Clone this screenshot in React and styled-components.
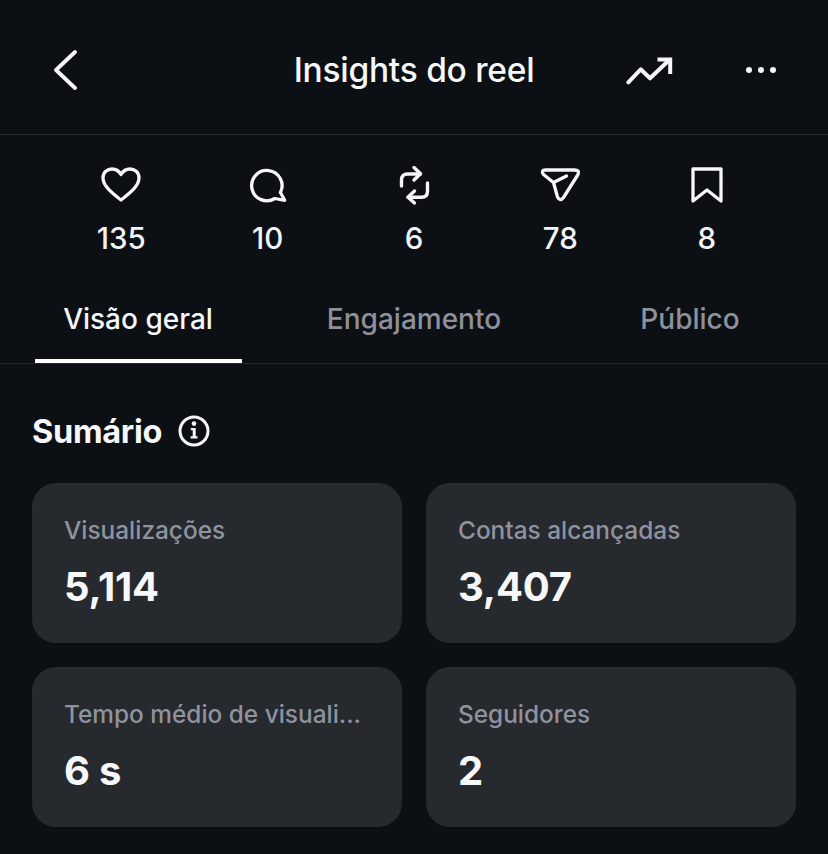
import React from "react";
import styled, { createGlobalStyle } from "styled-components";

const Global = createGlobalStyle`
  html, body { margin: 0; padding: 0; background: #0c0f14; }
  body { font-family: Inter, "Liberation Sans", sans-serif; -webkit-font-smoothing: antialiased; }
`;
const Page = styled.div`
  width: 828px; height: 854px; overflow: hidden; background: #0c0f14; color: #f5f6f7;
`;
const Header = styled.header`
  height: 135px; box-sizing: border-box; border-bottom: 1px solid #26282d;
  display: grid; grid-template-columns: 276px 1fr 276px; align-items: center; padding-top: 6px;
`;
const HeaderLeft = styled.div`padding-left: 51px; display: flex; align-items: center;`;
const Title = styled.h1`
  margin: 0; font-size: 33.5px; font-weight: 550; letter-spacing: -0.25px; text-align: center; white-space: nowrap; color: #f6f7f8;
`;
const HeaderRight = styled.div`display: flex; align-items: center; padding-left: 68px; gap: 65px;`;
const Stats = styled.div`
  display: grid; grid-template-columns: repeat(5, 146.4px); padding: 25px 0 0 48px;
`;
const Stat = styled.div`
  display: flex; flex-direction: column; align-items: center; gap: 11px;
`;
const IconBox = styled.div`height: 50px; display: flex; align-items: center; justify-content: center;`;
const Num = styled.span`font-size: 29.5px; line-height: 34px; font-weight: 500; color: #f2f3f4;`;
const Tabs = styled.nav`
  margin-top: 25px; display: grid; grid-template-columns: repeat(3, 276px); height: 84px; box-sizing: border-box;
  border-bottom: 1px solid #26282d;
`;
const Tab = styled.div`
  position: relative; display: flex; justify-content: center; padding-top: 22px;
  font-size: 28px; line-height: 34px; font-weight: 550; color: ${p => (p.$active ? "#f6f7f8" : "#8e919b")};
  &::after {
    content: ""; display: ${p => (p.$active ? "block" : "none")}; position: absolute; left: 35px; width: 207px; bottom: 0; height: 4px; background: #fff;
  }
`;
const Section = styled.section`padding: 47px 32px 0;`;
const SectionHead = styled.div`display: flex; align-items: center; gap: 16px; height: 40px; margin-bottom: 32px;`;
const SectionTitle = styled.h2`margin: 0; font-size: 32.5px; font-weight: 650; color: #f6f7f8; letter-spacing: -0.3px;`;
const Grid = styled.div`display: grid; grid-template-columns: 370px 370px; gap: 24px;`;
const Card = styled.div`
  height: 160px; box-sizing: border-box; background: #26292e; border-radius: 24px; padding: 31px 32px;
`;
const Label = styled.div`
  font-size: 24.4px; line-height: 32px; font-weight: 500; color: #8f939f; white-space: nowrap;
`;
const Value = styled.div`margin-top: 17px; font-size: 40px; line-height: 48px; font-weight: 700; color: #f6f7f8; letter-spacing: -0.2px;`;

const S = { fill: "none", stroke: "currentColor", strokeLinecap: "round", strokeLinejoin: "round" };
const Back = () => (<svg width="26" height="44" viewBox="0 0 26 44" {...S} strokeWidth="3.8"><path d="M24 4 L5 22 L24 40" /></svg>);
const Trend = () => (
  <svg width="60" height="40" viewBox="0 0 60 40" {...S} strokeWidth="4">
    <path d="M8.3 32.3 L20.7 19.3 L30 28.3 L49.5 9.8" />
    <path d="M37.5 9.5 H50.2 V24" strokeLinecap="butt" strokeLinejoin="miter" />
  </svg>
);
const Dots = () => (<svg width="32" height="8" viewBox="0 0 32 8" fill="currentColor"><circle cx="4" cy="4" r="3" /><circle cx="16" cy="4" r="3" /><circle cx="28" cy="4" r="3" /></svg>);
const Heart = () => (<svg width="40" height="36" viewBox="0 0 40 36" {...S} strokeWidth="3.3"><path d="M20 33 C14 28 2 20 2 11 C2 5 6.5 2 11 2 C15 2 18 4 20 7.5 C22 4 25 2 29 2 C33.5 2 38 5 38 11 C38 20 26 28 20 33 Z" /></svg>);
const Bubble = () => (<svg width="50" height="50" viewBox="-2.4 0 50 50" {...S} strokeWidth="3.3"><path d="M35 32.5 A15.2 15.2 0 1 0 29.5 38.5 L39.3 40.3 Z" /></svg>);
const Repost = () => (
  <svg width="50" height="50" viewBox="-1 0 50 50" {...S} strokeWidth="3.4">
    <path d="M11.5 26 V20 Q11.5 14 17.5 14 H30.5" />
    <path d="M24 7.5 L30.5 13.8 L24 20" />
    <path d="M37.5 23 V31 Q37.5 37.3 31.5 37.3 H18" />
    <path d="M24.5 31 L18 37.3 L24.5 43" />
  </svg>
);
const Send = () => (
  <svg width="50" height="50" viewBox="0 0 50 50" {...S} strokeWidth="3.3">
    <path d="M10.5 10 H39.5 Q45 10 43 14.5 L28.5 37.5 Q25 42 22.5 37 L18.5 22.5 L8.5 14.5 Q5.5 10 10.5 10 Z" />
    <path d="M18.5 22.5 L31.5 16" />
  </svg>
);
const Bookmark = () => (<svg width="32" height="36" viewBox="0 0 32 36" {...S} strokeWidth="3.3"><path d="M2 2 H30 V34 L16 23 L2 34 Z" /></svg>);
const Info = () => (
  <svg width="32" height="32" viewBox="0 0 32 32">
    <circle cx="16" cy="16" r="14" fill="none" stroke="currentColor" strokeWidth="3" />
    <circle cx="16" cy="8.6" r="2.3" fill="currentColor" />
    <path d="M12.8 13 H17.7 V21.2 H19.5 V23.6 H12.6 V21.2 H14.7 V15.2 H12.8 Z" fill="currentColor" />
  </svg>
);

const stats = [[Heart, "135"], [Bubble, "10"], [Repost, "6"], [Send, "78"], [Bookmark, "8"]];
const cards = [["Visualizações", "5,114"], ["Contas alcançadas", "3,407"], ["Tempo médio de visuali...", "6 s"], ["Seguidores", "2"]];

export default function App() {
  return (
    <Page>
      <Global />
      <Header>
        <HeaderLeft><Back /></HeaderLeft>
        <Title>Insights do reel</Title>
        <HeaderRight><Trend /><Dots /></HeaderRight>
      </Header>
      <Stats>
        {stats.map(([I, n]) => (
          <Stat key={n}><IconBox><I /></IconBox><Num>{n}</Num></Stat>
        ))}
      </Stats>
      <Tabs>
        <Tab $active>Visão geral</Tab>
        <Tab>Engajamento</Tab>
        <Tab>Público</Tab>
      </Tabs>
      <Section>
        <SectionHead><SectionTitle>Sumário</SectionTitle><Info /></SectionHead>
        <Grid>
          {cards.map(([l, v]) => (
            <Card key={l}><Label>{l}</Label><Value>{v}</Value></Card>
          ))}
        </Grid>
      </Section>
    </Page>
  );
}
